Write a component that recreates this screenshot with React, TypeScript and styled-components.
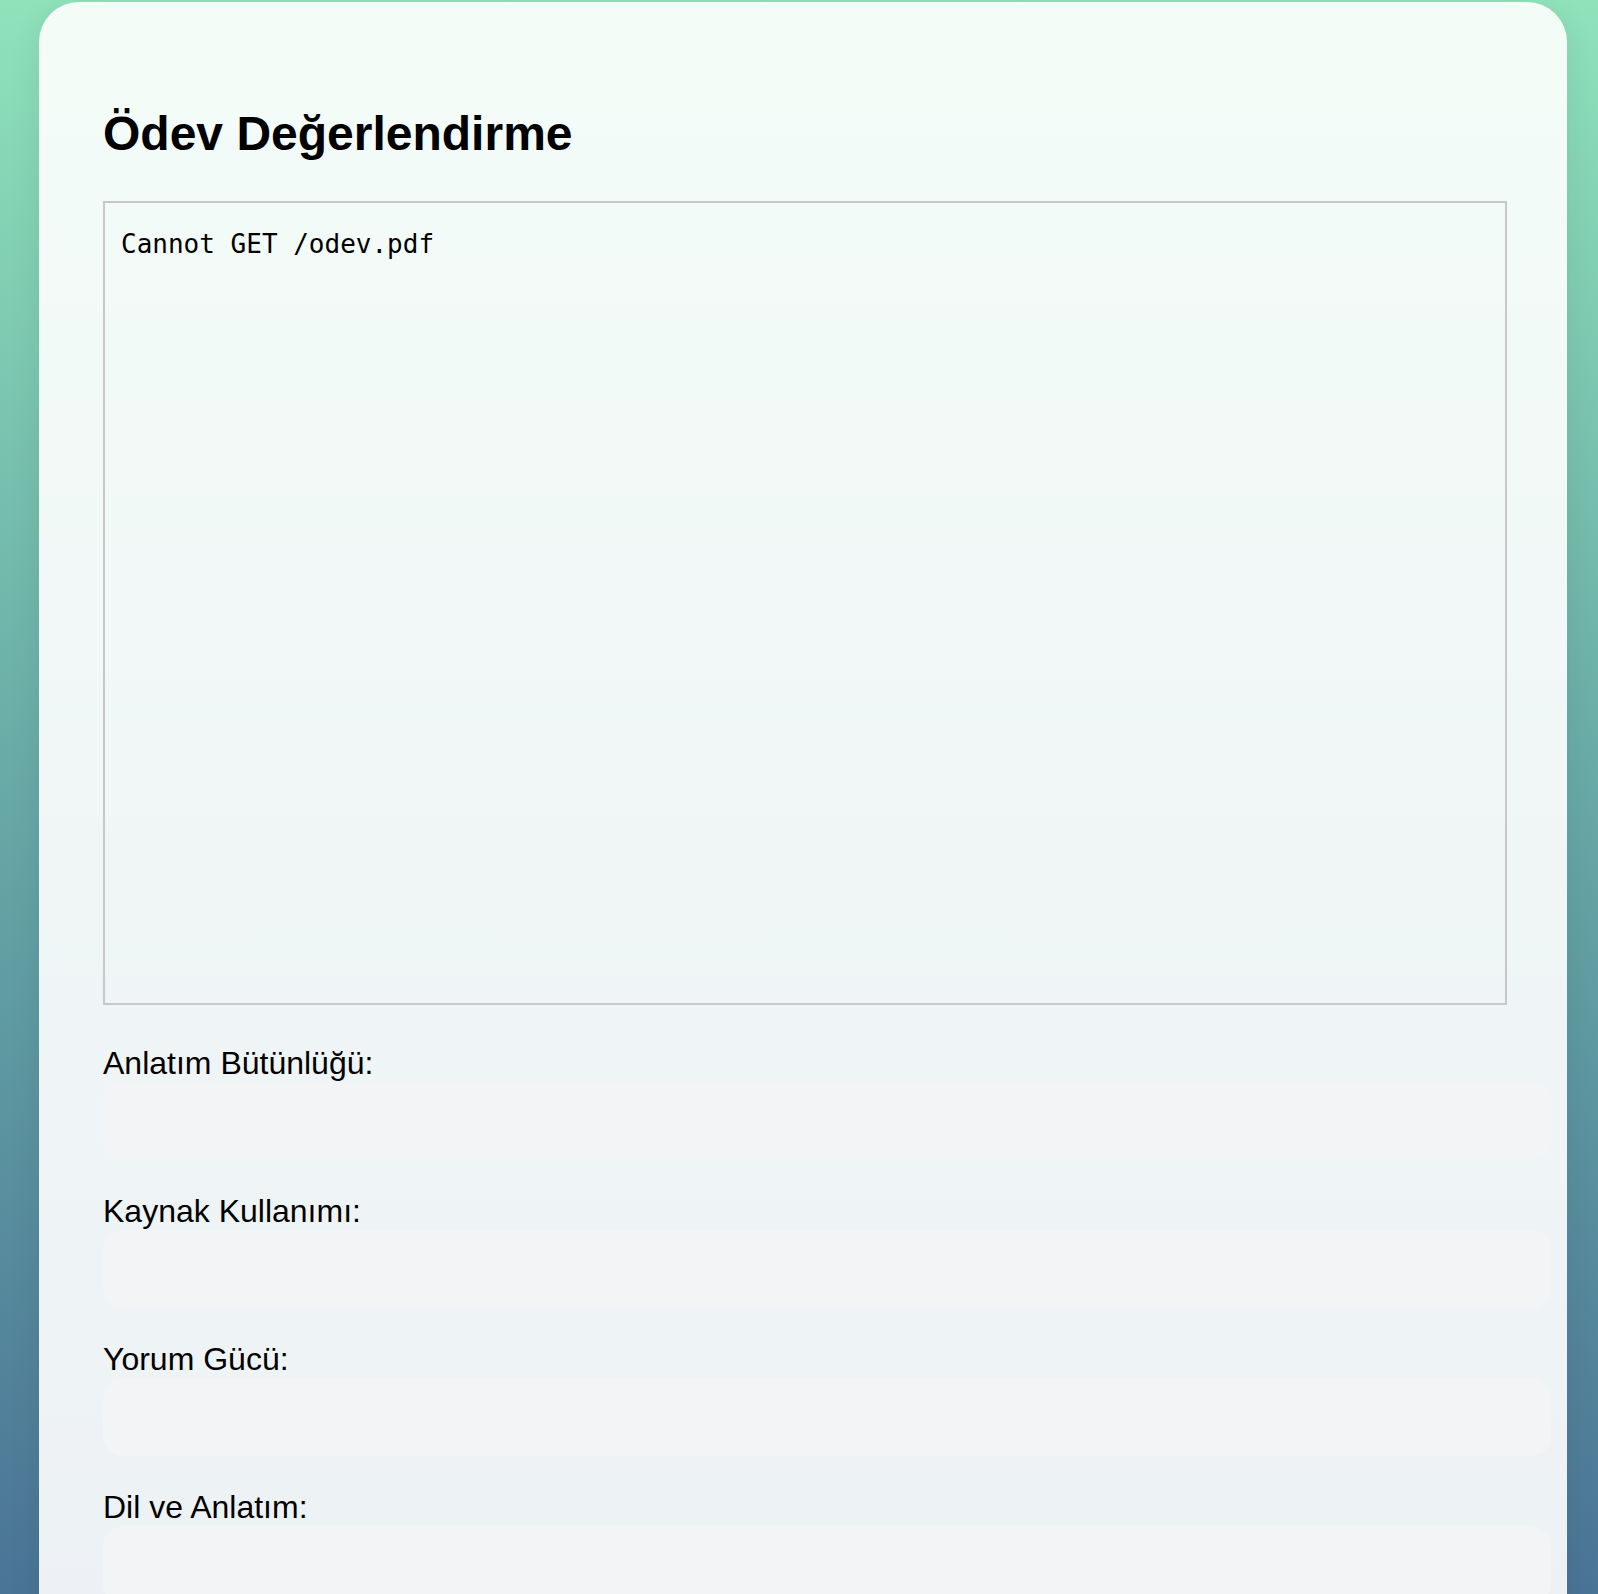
import React from "react";
import styled, { createGlobalStyle } from "styled-components";

const GlobalStyle = createGlobalStyle`
    html, body {
        margin: 0;
        padding: 0;
    }

    body {
        min-height: 100vh;
        background: linear-gradient(180deg, #8fe2ba 0%, #67a9a6 50%, #4a7496 100%);
        background-attachment: fixed;
        font-family: "Liberation Sans", Arial, Helvetica, sans-serif;
        color: #000;
    }
`;

const Page = styled.div`
    padding: 2px 31px 0 39px;
`;

const Card = styled.main`
    width: 1528px;
    box-sizing: border-box;
    padding: 64px 64px 40px;
    background: rgba(255, 255, 255, 0.9);
    border-radius: 40px;
    box-shadow: 0 8px 32px rgba(0, 0, 0, 0.08);
`;

const Title = styled.h2`
    font-size: 48px;
    font-weight: bold;
    line-height: normal;
    margin: 40px 0;
`;

const Preview = styled.div`
    width: 1400px;
    height: 800px;
    border: 2px solid #c8c8c8;
    margin-bottom: 40px;
    overflow: hidden;
`;

const PreviewText = styled.pre`
    font-family: "DejaVu Sans Mono", Menlo, monospace;
    font-size: 26px;
    line-height: normal;
    margin: 26px 16px;
`;

const Field = styled.div`
    margin-bottom: 33px;
`;

const Label = styled.label`
    display: block;
    font-size: 32px;
    line-height: 37px;
`;

const Input = styled.input`
    display: block;
    width: 100%;
    height: 78px;
    padding: 0 24px;
    box-sizing: content-box;
    margin: 0;
    border: none;
    outline: none;
    border-radius: 20px;
    background: #f3f4f6;
    font-family: inherit;
    font-size: 32px;
`;

const criteria = [
    { id: "anlatim", label: "Anlatım Bütünlüğü:" },
    { id: "kaynak", label: "Kaynak Kullanımı:" },
    { id: "yorum", label: "Yorum Gücü:" },
    { id: "dil", label: "Dil ve Anlatım:" },
];

const App = () => {
    return (
        <Page>
            <GlobalStyle />
            <Card>
                <Title>Ödev Değerlendirme</Title>
                <Preview>
                    <PreviewText>Cannot GET /odev.pdf</PreviewText>
                </Preview>
                <form>
                    {criteria.map((c) => (
                        <Field key={c.id}>
                            <Label htmlFor={c.id}>{c.label}</Label>
                            <Input id={c.id} name={c.id} type="number" />
                        </Field>
                    ))}
                </form>
            </Card>
        </Page>
    );
};

export default App;
